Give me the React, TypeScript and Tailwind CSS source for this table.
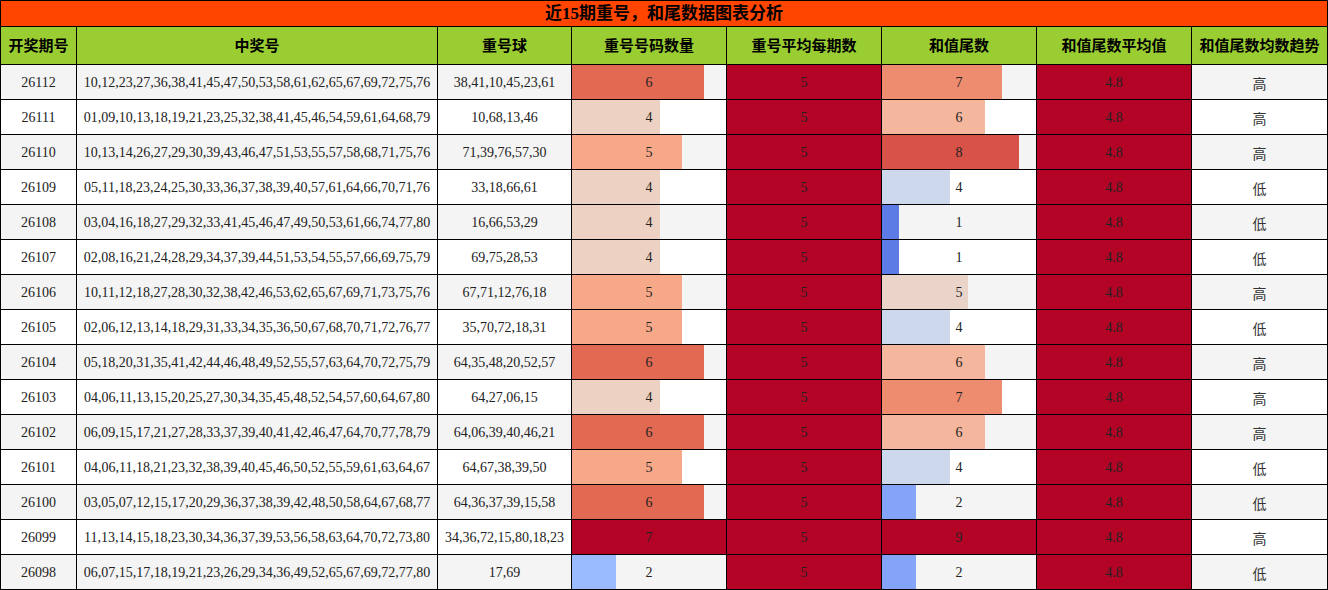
import React from "react";

type Row = {
  id: string;
  nums: string;
  rep: string;
  cnt: number;
  avg: number;
  tail: number;
  tailAvg: string;
  trend: string;
};

const rows: Row[] = [
  { id: "26112", nums: "10,12,23,27,36,38,41,45,47,50,53,58,61,62,65,67,69,72,75,76", rep: "38,41,10,45,23,61", cnt: 6, avg: 5, tail: 7, tailAvg: "4.8", trend: "高" },
  { id: "26111", nums: "01,09,10,13,18,19,21,23,25,32,38,41,45,46,54,59,61,64,68,79", rep: "10,68,13,46", cnt: 4, avg: 5, tail: 6, tailAvg: "4.8", trend: "高" },
  { id: "26110", nums: "10,13,14,26,27,29,30,39,43,46,47,51,53,55,57,58,68,71,75,76", rep: "71,39,76,57,30", cnt: 5, avg: 5, tail: 8, tailAvg: "4.8", trend: "高" },
  { id: "26109", nums: "05,11,18,23,24,25,30,33,36,37,38,39,40,57,61,64,66,70,71,76", rep: "33,18,66,61", cnt: 4, avg: 5, tail: 4, tailAvg: "4.8", trend: "低" },
  { id: "26108", nums: "03,04,16,18,27,29,32,33,41,45,46,47,49,50,53,61,66,74,77,80", rep: "16,66,53,29", cnt: 4, avg: 5, tail: 1, tailAvg: "4.8", trend: "低" },
  { id: "26107", nums: "02,08,16,21,24,28,29,34,37,39,44,51,53,54,55,57,66,69,75,79", rep: "69,75,28,53", cnt: 4, avg: 5, tail: 1, tailAvg: "4.8", trend: "低" },
  { id: "26106", nums: "10,11,12,18,27,28,30,32,38,42,46,53,62,65,67,69,71,73,75,76", rep: "67,71,12,76,18", cnt: 5, avg: 5, tail: 5, tailAvg: "4.8", trend: "高" },
  { id: "26105", nums: "02,06,12,13,14,18,29,31,33,34,35,36,50,67,68,70,71,72,76,77", rep: "35,70,72,18,31", cnt: 5, avg: 5, tail: 4, tailAvg: "4.8", trend: "低" },
  { id: "26104", nums: "05,18,20,31,35,41,42,44,46,48,49,52,55,57,63,64,70,72,75,79", rep: "64,35,48,20,52,57", cnt: 6, avg: 5, tail: 6, tailAvg: "4.8", trend: "高" },
  { id: "26103", nums: "04,06,11,13,15,20,25,27,30,34,35,45,48,52,54,57,60,64,67,80", rep: "64,27,06,15", cnt: 4, avg: 5, tail: 7, tailAvg: "4.8", trend: "高" },
  { id: "26102", nums: "06,09,15,17,21,27,28,33,37,39,40,41,42,46,47,64,70,77,78,79", rep: "64,06,39,40,46,21", cnt: 6, avg: 5, tail: 6, tailAvg: "4.8", trend: "高" },
  { id: "26101", nums: "04,06,11,18,21,23,32,38,39,40,45,46,50,52,55,59,61,63,64,67", rep: "64,67,38,39,50", cnt: 5, avg: 5, tail: 4, tailAvg: "4.8", trend: "低" },
  { id: "26100", nums: "03,05,07,12,15,17,20,29,36,37,38,39,42,48,50,58,64,67,68,77", rep: "64,36,37,39,15,58", cnt: 6, avg: 5, tail: 2, tailAvg: "4.8", trend: "低" },
  { id: "26099", nums: "11,13,14,15,18,23,30,34,36,37,39,53,56,58,63,64,70,72,73,80", rep: "34,36,72,15,80,18,23", cnt: 7, avg: 5, tail: 9, tailAvg: "4.8", trend: "高" },
  { id: "26098", nums: "06,07,15,17,18,19,21,23,26,29,34,36,49,52,65,67,69,72,77,80", rep: "17,69", cnt: 2, avg: 5, tail: 2, tailAvg: "4.8", trend: "低" },
];

// coolwarm anchors
const anchors: [number, [number, number, number]][] = [
  [0, [59, 76, 192]],
  [0.143, [103, 136, 238]],
  [0.286, [154, 187, 255]],
  [0.429, [201, 215, 240]],
  [0.5, [221, 220, 220]],
  [0.571, [237, 209, 194]],
  [0.714, [247, 168, 137]],
  [0.857, [226, 105, 82]],
  [1, [180, 4, 38]],
];

function coolwarm(t: number): string {
  const x = Math.max(0, Math.min(1, t));
  for (let i = 0; i < anchors.length - 1; i++) {
    const [a, ca] = anchors[i];
    const [b, cb] = anchors[i + 1];
    if (x >= a && x <= b) {
      const f = (x - a) / (b - a);
      const c = ca.map((v, k) => Math.round(v + (cb[k] - v) * f));
      return `rgb(${c[0]},${c[1]},${c[2]})`;
    }
  }
  return "rgb(180,4,38)";
}

function barStyle(frac: number, bg: string): React.CSSProperties {
  const pct = (frac * 100).toFixed(2);
  const col = coolwarm(frac);
  return {
    background: `linear-gradient(90deg, ${col} 0%, ${col} ${pct}%, ${bg} ${pct}%, ${bg} 100%)`,
  };
}

const headers = [
  "开奖期号",
  "中奖号",
  "重号球",
  "重号号码数量",
  "重号平均每期数",
  "和值尾数",
  "和值尾数平均值",
  "和值尾数均数趋势",
];

const serif = "font-['Liberation_Serif','Noto_Sans_CJK_SC',serif]";

export default function App() {
  return (
    <div className="w-[1328px] h-[590px] bg-white">
      <div className="w-[1328px] bg-black p-px flex flex-col gap-px">
        <div className={`h-[25px] bg-[#ff4500] flex items-center justify-center text-[17px] font-bold text-black ${serif}`}>
          近15期重号，和尾数据图表分析
        </div>
        <div className="grid grid-cols-[75px_360px_133px_154px_154px_154px_154px_135px] gap-px">
          {headers.map((h) => (
            <div
              key={h}
              className="h-[37px] bg-[#9acd32] flex items-center justify-center text-[15px] font-bold text-black font-['Noto_Sans_CJK_SC',sans-serif] whitespace-nowrap"
            >
              {h}
            </div>
          ))}
          {rows.map((r, i) => {
            const bg = i % 2 === 0 ? "#f4f4f4" : "#ffffff";
            const bgCls = i % 2 === 0 ? "bg-[#f4f4f4]" : "bg-white";
            const cell = `h-[34px] flex items-center justify-center text-[14px] text-[#222] ${serif} whitespace-nowrap`;
            return (
              <React.Fragment key={r.id}>
                <div className={`${cell} ${bgCls}`}>{r.id}</div>
                <div className={`${cell} ${bgCls}`}>{r.nums}</div>
                <div className={`${cell} ${bgCls}`}>{r.rep}</div>
                <div className={cell} style={barStyle(r.cnt / 7, bg)}>{r.cnt}</div>
                <div className={cell} style={barStyle(1, bg)}>{r.avg}</div>
                <div className={cell} style={barStyle(r.tail / 9, bg)}>{r.tail}</div>
                <div className={cell} style={barStyle(1, bg)}>{r.tailAvg}</div>
                <div className={`${cell} ${bgCls} font-['Noto_Sans_CJK_SC',sans-serif] text-[#333] pt-[3px]`}>{r.trend}</div>
              </React.Fragment>
            );
          })}
        </div>
      </div>
    </div>
  );
}
